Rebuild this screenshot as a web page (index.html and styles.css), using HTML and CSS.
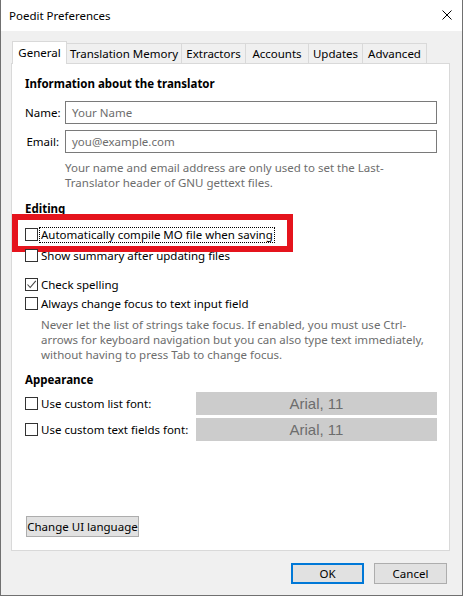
FILE: index.html
```html
<!DOCTYPE html>
<html>
<head>
<meta charset="utf-8">
<link rel="stylesheet" href="styles.css">
</head>
<body>
<div class="window">
  <div class="titlebar">
    <span class="title">Poedit Preferences</span>
    <svg class="close" width="10" height="10" viewBox="0 0 10 10"><path d="M0.5 0.5 L9.5 9.5 M9.5 0.5 L0.5 9.5" stroke="#000" stroke-width="1" fill="none"/></svg>
  </div>
  <div class="body">
    <div class="tabs">
      <div class="tab active t-gen">General</div>
      <div class="tab t-tm">Translation Memory</div>
      <div class="tab t-ext">Extractors</div>
      <div class="tab t-acc">Accounts</div>
      <div class="tab t-upd">Updates</div>
      <div class="tab t-adv">Advanced</div>
    </div>
    <div class="panel">
      <div class="heading h-info">Information about the translator</div>
      <div class="field f-name">
        <label class="flabel">Name:</label>
        <div class="input placeholder">Your Name</div>
      </div>
      <div class="field f-email">
        <label class="flabel">Email:</label>
        <div class="input placeholder">you@example.com</div>
      </div>
      <div class="help help-info">Your name and email address are only used to set the Last-<br>Translator header of GNU gettext files.</div>

      <div class="heading h-edit">Editing</div>
      <div class="check r-auto">
        <span class="box"></span><span class="clabel focus">Automatically compile MO file when saving</span>
        <div class="highlight"></div>
      </div>
      <div class="check r-summary">
        <span class="box"></span><span class="clabel">Show summary after updating files</span>
      </div>
      <div class="check r-spell">
        <span class="box checked"><svg width="11" height="11" viewBox="0 0 11 11"><path d="M1.5 5.5 L4.2 8.5 L9.8 1.8" stroke="#444" stroke-width="1.1" fill="none"/></svg></span><span class="clabel">Check spelling</span>
      </div>
      <div class="check r-focus">
        <span class="box"></span><span class="clabel">Always change focus to text input field</span>
      </div>
      <div class="help help-focus">Never let the list of strings take focus. If enabled, you must use Ctrl-<br>arrows for keyboard navigation but you can also type text immediately,<br>without having to press Tab to change focus.</div>

      <div class="heading h-appear">Appearance</div>
      <div class="fontrow fr-list">
        <div class="check"><span class="box"></span><span class="clabel">Use custom list font:</span></div>
        <div class="fontbtn">Arial, 11</div>
      </div>
      <div class="fontrow fr-text">
        <div class="check"><span class="box"></span><span class="clabel">Use custom text fields font:</span></div>
        <div class="fontbtn">Arial, 11</div>
      </div>

      <div class="btn uilang">Change UI language</div>
    </div>
    <div class="footer">
      <div class="btn dlg default">OK</div>
      <div class="btn dlg">Cancel</div>
    </div>
  </div>
</div>
</body>
</html>
```
FILE: styles.css
```css
* { box-sizing: border-box; }
html, body { margin: 0; padding: 0; background: #f0f0f0; }
body {
  font-family: "Noto Sans", "Open Sans", sans-serif;
  font-size: 11.5px;
  color: #000;
}
.window {
  width: 463px;
  height: 596px;
  border: 1px solid #707070;
  border-top: none;
  background: #f0f0f0;
  display: flex;
  flex-direction: column;
}
.titlebar {
  height: 31px;
  background: #fff;
  display: flex;
  align-items: center;
  padding-left: 8px;
  padding-right: 10px;
  justify-content: space-between;
}
.title { font-size: 11.5px; line-height: 15px; margin-top: -1px; }
.close { margin-top: -1px; }
.body {
  flex: 1;
  display: flex;
  flex-direction: column;
  padding: 10px 12px 0 10px;
}
.tabs {
  display: flex;
  align-items: flex-end;
  height: 22px;
  padding-left: 1px;
  position: relative;
  z-index: 1;
}
.tab {
  height: 20px;
  border: 1px solid #d9d9d9;
  border-bottom: none;
  margin-left: -1px;
  line-height: 19px;
  background: #f0f0f0;
  white-space: nowrap;
  text-align: center;
}
.tab:first-child { margin-left: 0; }
.tab.active {
  height: 23px;
  margin-bottom: -1px;
  background: #fff;
  line-height: 21px;
}
.t-gen { width: 55px; }
.t-tm { width: 116px; }
.t-ext { width: 65px; }
.t-acc { width: 64px; }
.t-upd { width: 55px; }
.t-adv { width: 65px; }
.panel {
  height: 488px;
  background: #fff;
  border: 1px solid #d9d9d9;
  display: flex;
  flex-direction: column;
  padding: 0 12px 13px 13px;
}
.heading { font-weight: bold; line-height: 15px; height: 15px; }
.h-info { margin-top: 12px; }
.field { display: flex; align-items: center; height: 23px; }
.f-name { margin-top: 10px; }
.f-email { margin-top: 6px; }
.flabel { width: 34px; text-align: right; margin-right: 6px; white-space: nowrap; }
.input {
  flex: 1;
  height: 23px;
  border: 1px solid #7a7a7a;
  padding-left: 6px;
  line-height: 21px;
}
.placeholder { color: #6d6d6d; }
.help { color: #6d6d6d; line-height: 15px; white-space: nowrap; }
.help-info { margin-top: 7px; padding-left: 40px; }
.h-edit { margin-top: 11px; }
.check {
  display: flex;
  align-items: center;
  height: 19px;
  position: relative;
}
.box {
  width: 13px;
  height: 13px;
  border: 1px solid #333;
  background: #fff;
  margin-right: 2px;
  flex: none;
  display: flex;
  align-items: center;
  justify-content: center;
}
.clabel { padding: 0 1px; line-height: 14px; white-space: nowrap; }
.focus { outline: 1px dotted #000; outline-offset: 0; }
.r-auto { margin-top: 9px; }
.r-summary { margin-top: 2px; }
.r-spell { margin-top: 10px; }
.help-focus { margin-top: 4px; padding-left: 16px; }
.highlight {
  position: absolute;
  left: -13px;
  top: -11px;
  width: 281px;
  height: 38px;
  border: 6px solid #e5141d;
  pointer-events: none;
}
.h-appear { margin-top: 10px; }
.fontrow {
  display: flex;
  align-items: center;
  justify-content: space-between;
  height: 23px;
}
.fr-list { margin-top: 5px; }
.fr-text { margin-top: 3px; }
.fontbtn {
  width: 241px;
  height: 23px;
  background: #cccccc;
  color: #6d6d6d;
  font-family: "Liberation Sans", Arial, sans-serif;
  font-size: 15px;
  text-align: center;
  line-height: 23px;
}
.btn {
  height: 21px;
  background: #e1e1e1;
  border: 1px solid #adadad;
  text-align: center;
  line-height: 19px;
  white-space: nowrap;
}
.uilang {
  margin-top: auto;
  align-self: flex-start;
  width: 113px;
  margin-left: 1px;
}
.footer {
  display: flex;
  justify-content: flex-end;
  gap: 10px;
  margin-top: 12px;
  padding-right: 3px;
}
.dlg { width: 73px; }
.default { border: 2px solid #0078d7; line-height: 17px; }
```
